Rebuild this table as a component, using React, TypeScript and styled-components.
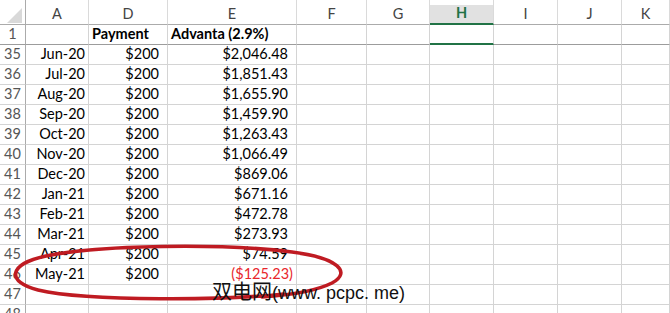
import React from 'react'
import styled, { createGlobalStyle } from 'styled-components'

const GlobalStyle = createGlobalStyle`
  html, body {
    margin: 0;
    padding: 0;
    background: #fff;
    overflow: hidden;
  }
  body {
    font-family: 'Lato', 'Liberation Sans', sans-serif;
  }
`

const COLS = '26px 63px 79px 129px 70px 63px 64px 64px 64px 1fr'

const Sheet = styled.div`
  position: relative;
  width: 670px;
  height: 313px;
  overflow: hidden;
`

const Grid = styled.div`
  display: grid;
  grid-template-columns: ${COLS};
  grid-auto-rows: 20px;
  grid-template-rows: 25px;
`

const ColHead = styled.div<{ $active?: boolean }>`
  box-sizing: border-box;
  display: flex;
  align-items: flex-end;
  justify-content: center;
  padding-bottom: 2px;
  border-right: 1px solid #dadada;
  border-bottom: ${p => (p.$active ? '2px solid #217346' : '1px solid #ababab')};
  background: ${p => (p.$active ? 'linear-gradient(#fff 0 5px, #e1e1e1 5px)' : '#fff')};
  color: ${p => (p.$active ? '#217346' : '#444')};
  font-weight: ${p => (p.$active ? 700 : 400)};
  font-size: 14.5px;
`

const Corner = styled.div`
  box-sizing: border-box;
  border-right: 1px solid #ababab;
  border-bottom: 1px solid #ababab;
  display: flex;
  align-items: flex-end;
  justify-content: flex-end;
  padding: 0 3px 1px 0;
`

const RowHead = styled.div<{ $freeze?: boolean }>`
  box-sizing: border-box;
  display: flex;
  align-items: flex-end;
  justify-content: center;
  padding-bottom: 1px;
  line-height: 18px;
  border-right: 1px solid #ababab;
  border-bottom: 1px solid ${p => (p.$freeze ? '#9c9c9c' : '#d4d4d4')};
  color: #555;
  font-size: 14.5px;
`

const Cell = styled.div<{
  $align?: 'left' | 'right'
  $bold?: boolean
  $red?: boolean
  $pad?: number
  $freeze?: boolean
  $selected?: boolean
}>`
  box-sizing: border-box;
  display: flex;
  align-items: flex-end;
  justify-content: ${p => (p.$align === 'right' ? 'flex-end' : 'flex-start')};
  padding: 0 ${p => p.$pad ?? 3}px 1px 3px;
  line-height: 18px;
  border-right: 1px solid #d4d4d4;
  border-bottom: ${p =>
    p.$selected ? '2px solid #217346' : p.$freeze ? '1px solid #9c9c9c' : '1px solid #d4d4d4'};
  font-size: 14.5px;
  font-weight: ${p => (p.$bold ? 700 : 400)};
  color: ${p => (p.$red ? '#e8262b' : '#000')};
  white-space: nowrap;
`

const Overlay = styled.svg`
  position: absolute;
  left: 0;
  top: 0;
  pointer-events: none;
`

const Watermark = styled.div`
  position: absolute;
  left: 212px;
  top: 279px;
  font-family: 'Noto Sans CJK SC', 'Liberation Sans', sans-serif;
  font-size: 20px;
  line-height: 24px;
  color: #111;
  white-space: nowrap;
`

const WatermarkLatin = styled.span`
  font-family: 'Liberation Sans', 'Noto Sans CJK SC', sans-serif;
  font-size: 18px;
`

const columns = ['A', 'D', 'E', 'F', 'G', 'H', 'I', 'J', 'K']

const rows = [
  { n: 35, date: 'Jun-20', bal: '$2,046.48' },
  { n: 36, date: 'Jul-20', bal: '$1,851.43' },
  { n: 37, date: 'Aug-20', bal: '$1,655.90' },
  { n: 38, date: 'Sep-20', bal: '$1,459.90' },
  { n: 39, date: 'Oct-20', bal: '$1,263.43' },
  { n: 40, date: 'Nov-20', bal: '$1,066.49' },
  { n: 41, date: 'Dec-20', bal: '$869.06' },
  { n: 42, date: 'Jan-21', bal: '$671.16' },
  { n: 43, date: 'Feb-21', bal: '$472.78' },
  { n: 44, date: 'Mar-21', bal: '$273.93' },
  { n: 45, date: 'Apr-21', bal: '$74.59' },
  { n: 46, date: 'May-21', bal: '($125.23)', neg: true },
  { n: 47 },
  { n: 48 }
]

const EmptyCells = ({ count }: { count: number }) => (
  <>
    {Array.from({ length: count }).map((_, i) => (
      <Cell key={i} />
    ))}
  </>
)

const App = () => {
  return (
    <Sheet>
      <GlobalStyle />
      <Grid>
        <Corner>
          <svg width="15" height="15" viewBox="0 0 15 15">
            <polygon points="0,15 15,15 15,0" fill="#d9d9d9" />
          </svg>
        </Corner>
        {columns.map(c => (
          <ColHead key={c} $active={c === 'H'}>
            {c}
          </ColHead>
        ))}

        <RowHead $freeze>1</RowHead>
        <Cell $freeze />
        <Cell $freeze $bold>Payment</Cell>
        <Cell $freeze $bold>Advanta (2.9%)</Cell>
        <Cell $freeze />
        <Cell $freeze />
        <Cell $selected />
        <Cell $freeze />
        <Cell $freeze />
        <Cell $freeze />

        {rows.map(r => (
          <React.Fragment key={r.n}>
            <RowHead>{r.n}</RowHead>
            <Cell $align="right">{r.date}</Cell>
            <Cell $align="right" $pad={8}>
              {r.date ? '$200' : ''}
            </Cell>
            <Cell $align="right" $pad={r.neg ? 3 : 8} $red={r.neg}>
              {r.bal}
            </Cell>
            <EmptyCells count={6} />
          </React.Fragment>
        ))}
      </Grid>

      <Overlay width="670" height="313" viewBox="0 0 670 313">
        <path
          d="M 284 294 C 230 300, 90 302, 38 290 C 6 282, 8 264, 46 256 C 100 245, 220 243, 292 252 C 338 258, 352 272, 332 283 C 316 291, 292 295, 262 297"
          fill="none"
          stroke="#bf1b22"
          strokeWidth="3.6"
          strokeLinecap="round"
        />
      </Overlay>
      <Watermark>
        双电网<WatermarkLatin>(www. pcpc. me)</WatermarkLatin>
      </Watermark>
    </Sheet>
  )
}

export default App
